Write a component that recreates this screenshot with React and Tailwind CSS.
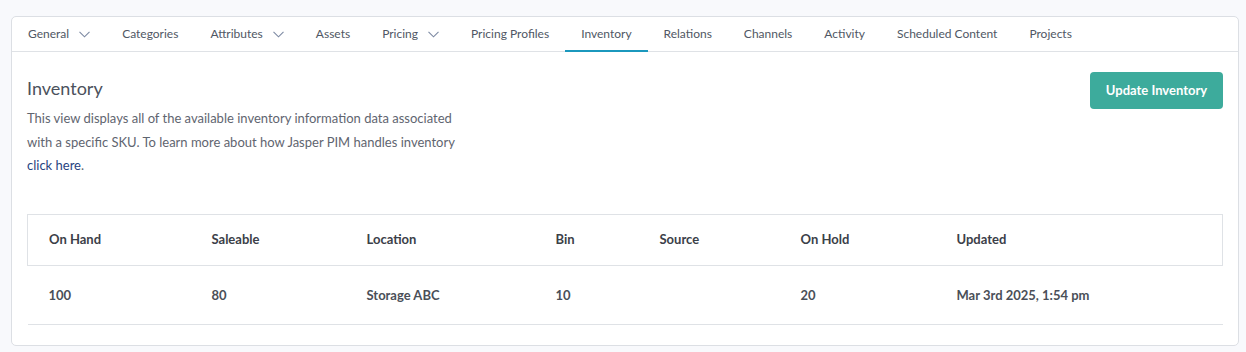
import React from 'react';

const tabs = [
  { label: 'General', menu: true },
  { label: 'Categories' },
  { label: 'Attributes', menu: true },
  { label: 'Assets' },
  { label: 'Pricing', menu: true },
  { label: 'Pricing Profiles' },
  { label: 'Inventory', active: true },
  { label: 'Relations' },
  { label: 'Channels' },
  { label: 'Activity' },
  { label: 'Scheduled Content' },
  { label: 'Projects' },
];

const columns = [
  { key: 'onHand', label: 'On Hand', w: 'w-[163px]' },
  { key: 'saleable', label: 'Saleable', w: 'w-[155px]' },
  { key: 'location', label: 'Location', w: 'w-[189px]' },
  { key: 'bin', label: 'Bin', w: 'w-[104px]' },
  { key: 'source', label: 'Source', w: 'w-[141px]' },
  { key: 'onHold', label: 'On Hold', w: 'w-[156px]' },
  { key: 'updated', label: 'Updated', w: '' },
];

const rows = [
  { onHand: 100, saleable: 80, location: 'Storage ABC', bin: 10, source: '', onHold: 20, updated: 'Mar 3rd 2025, 1:54 pm' },
];

function Chevron() {
  return (
    <svg width="11" height="7" viewBox="0 0 11 7" fill="none" className="ml-[10px] text-[#7d8aa3]">
      <path d="M0.5 0.8 L5.5 5.8 L10.5 0.8" stroke="currentColor" strokeWidth="1.1" />
    </svg>
  );
}

export default function App() {
  return (
    <div className="min-h-[352px] bg-[#f8f9fc] pt-4 pl-[11px] pr-[7px] pb-[6px] font-['Lato','Noto_Sans',sans-serif]">
      <div className="bg-white border border-[#dcdfe4] rounded-[5px]">
        {/* Tabs */}
        <div className="flex h-[35px] border-b border-[#dfe2e6]">
          {tabs.map((t) => (
            <div
              key={t.label}
              className={`flex items-center px-4 text-[12px] text-[#505764] ${t.active ? 'border-b-2 border-[#1b98bd] -mb-px' : ''}`}
            >
              {t.label}
              {t.menu && <Chevron />}
            </div>
          ))}
        </div>

        <div className="px-[15px] pt-5 pb-[20px]">
          <div className="flex items-start justify-between">
            <div>
              <h2 className="mt-[2px] text-[18px] leading-[28px] text-[#4b515c]">Inventory</h2>
              <p className="mt-[5px] w-[440px] text-[13px] leading-[23.5px] text-[#5f6570]">
                This view displays all of the available inventory information data associated with a specific SKU. To learn more about how Jasper PIM handles inventory{' '}
                <a className="text-[#28437f]">click here</a>.
              </p>
            </div>
            <button className="h-[37px] w-[133px] rounded-[4px] bg-[#3dab9c] text-[13px] font-bold text-white">
              Update Inventory
            </button>
          </div>

          <table className="mt-[36px] w-full text-[13px] border-collapse">
            <thead>
              <tr className="border border-[#dfe2e6] h-[51px]">
                {columns.map((c) => (
                  <th key={c.key} className={`${c.w} pl-[21px] text-left font-bold text-[#3b4048]`}>{c.label}</th>
                ))}
              </tr>
            </thead>
            <tbody>
              {rows.map((r, i) => (
                <tr key={i} className="border-b border-[#dfe2e6] h-[59px]">
                  {columns.map((c) => (
                    <td key={c.key} className="pl-[21px] pt-[2px] font-bold text-[#4a4f58]">{r[c.key]}</td>
                  ))}
                </tr>
              ))}
            </tbody>
          </table>
        </div>
      </div>
    </div>
  );
}
